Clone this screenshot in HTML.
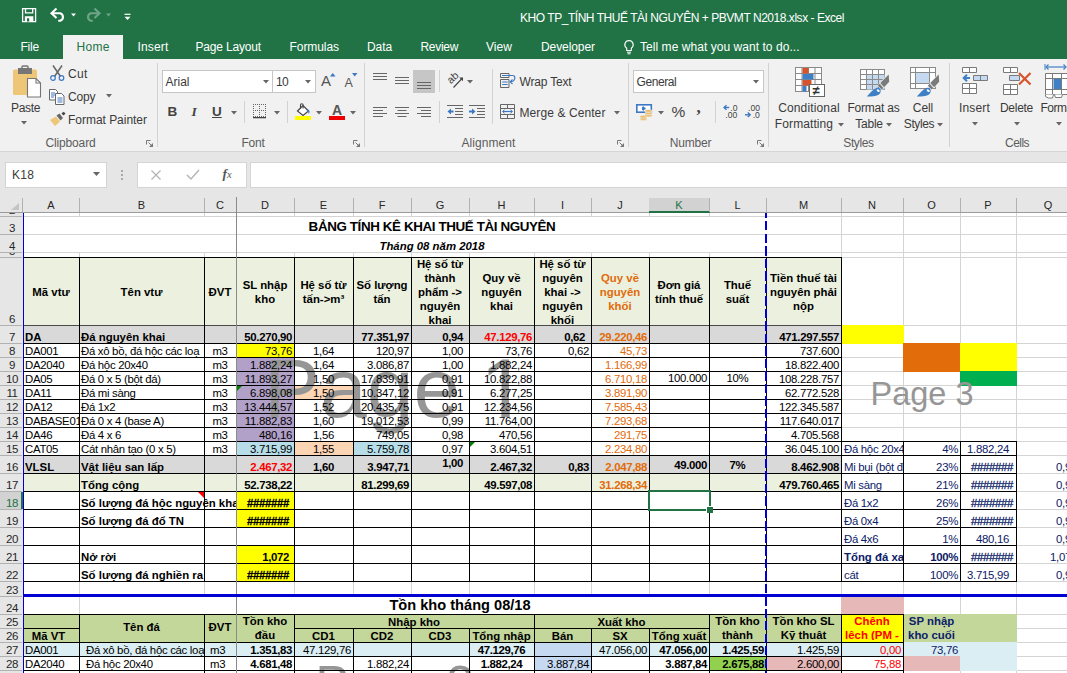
<!DOCTYPE html><html lang="vi"><head><meta charset="utf-8"><title>KHO TP_TÍNH THUẾ TÀI NGUYÊN + PBVMT N2018.xlsx - Excel</title><style>
*{box-sizing:border-box;margin:0;padding:0}
html,body{width:1067px;height:673px;overflow:hidden;background:#fff}
body{position:relative;font-family:"Liberation Sans",sans-serif;font-size:12px;color:#262626}
.abs{position:absolute}
#grid{position:absolute;left:0;top:0;width:1067px;height:673px;overflow:hidden}
.f,.l,.t,.wm{position:absolute}
.t{font-size:11.4px;line-height:13px;color:#000;overflow:hidden;white-space:nowrap;display:flex;align-items:flex-end;justify-content:flex-end;padding:0 2px 0 1px}
.t.b{font-weight:bold}
.t.n{letter-spacing:-.33px}
.t.h{-webkit-text-stroke:.3px currentColor}
.t.r{letter-spacing:-.3px}
.t.i{font-style:italic}
.t.c{justify-content:center;text-align:center}
.t.lft{justify-content:flex-start;text-align:left}
.t.m{align-items:center}
.t.top{align-items:flex-start;padding-top:1px}
.t.hd{line-height:14px}
.t.hd2{line-height:14px}
.wm{color:rgba(70,70,70,.62);white-space:nowrap;font-family:"Liberation Sans",sans-serif}
.ui{position:absolute;white-space:nowrap;font-size:12px;color:#3a3a3a}
.sep{position:absolute;width:1px;background:#d2d2d2}
.hc{position:absolute;top:197px;height:15px;font-size:11px;color:#262626;text-align:center;line-height:16px}
.hr{position:absolute;left:0;width:22px;font-size:11.5px;color:#262626;text-align:center;overflow:hidden}
.hr span{position:absolute;left:1px;width:22px;bottom:-1px;line-height:13px;letter-spacing:-.4px}
svg{position:absolute;overflow:visible}
</style></head><body>
<div id="grid">
<div class="abs" style="left:0;top:212px;width:1067px;height:461px;background:#fff"></div>
<div class="l" style="left:79px;top:213px;width:1px;height:460px;background:#d4d4d4"></div>
<div class="l" style="left:204px;top:213px;width:1px;height:460px;background:#d4d4d4"></div>
<div class="l" style="left:236px;top:213px;width:1px;height:460px;background:#d4d4d4"></div>
<div class="l" style="left:294px;top:213px;width:1px;height:460px;background:#d4d4d4"></div>
<div class="l" style="left:353px;top:213px;width:1px;height:460px;background:#d4d4d4"></div>
<div class="l" style="left:411px;top:213px;width:1px;height:460px;background:#d4d4d4"></div>
<div class="l" style="left:469px;top:213px;width:1px;height:460px;background:#d4d4d4"></div>
<div class="l" style="left:534px;top:213px;width:1px;height:460px;background:#d4d4d4"></div>
<div class="l" style="left:591px;top:213px;width:1px;height:460px;background:#d4d4d4"></div>
<div class="l" style="left:649px;top:213px;width:1px;height:460px;background:#d4d4d4"></div>
<div class="l" style="left:709px;top:213px;width:1px;height:460px;background:#d4d4d4"></div>
<div class="l" style="left:766px;top:213px;width:1px;height:460px;background:#d4d4d4"></div>
<div class="l" style="left:841px;top:213px;width:1px;height:460px;background:#d4d4d4"></div>
<div class="l" style="left:903px;top:213px;width:1px;height:460px;background:#d4d4d4"></div>
<div class="l" style="left:960px;top:213px;width:1px;height:460px;background:#d4d4d4"></div>
<div class="l" style="left:1016px;top:213px;width:1px;height:460px;background:#d4d4d4"></div>
<div class="l" style="left:1080px;top:213px;width:1px;height:460px;background:#d4d4d4"></div>
<div class="l" style="left:24px;top:216px;width:1043px;height:1px;background:#d4d4d4"></div>
<div class="l" style="left:24px;top:234px;width:1043px;height:1px;background:#d4d4d4"></div>
<div class="l" style="left:24px;top:252px;width:1043px;height:1px;background:#d4d4d4"></div>
<div class="l" style="left:24px;top:257px;width:1043px;height:1px;background:#d4d4d4"></div>
<div class="l" style="left:24px;top:325px;width:1043px;height:1px;background:#d4d4d4"></div>
<div class="l" style="left:24px;top:343px;width:1043px;height:1px;background:#d4d4d4"></div>
<div class="l" style="left:24px;top:357px;width:1043px;height:1px;background:#d4d4d4"></div>
<div class="l" style="left:24px;top:371px;width:1043px;height:1px;background:#d4d4d4"></div>
<div class="l" style="left:24px;top:385px;width:1043px;height:1px;background:#d4d4d4"></div>
<div class="l" style="left:24px;top:399px;width:1043px;height:1px;background:#d4d4d4"></div>
<div class="l" style="left:24px;top:413px;width:1043px;height:1px;background:#d4d4d4"></div>
<div class="l" style="left:24px;top:427px;width:1043px;height:1px;background:#d4d4d4"></div>
<div class="l" style="left:24px;top:441px;width:1043px;height:1px;background:#d4d4d4"></div>
<div class="l" style="left:24px;top:455px;width:1043px;height:1px;background:#d4d4d4"></div>
<div class="l" style="left:24px;top:473px;width:1043px;height:1px;background:#d4d4d4"></div>
<div class="l" style="left:24px;top:491px;width:1043px;height:1px;background:#d4d4d4"></div>
<div class="l" style="left:24px;top:509px;width:1043px;height:1px;background:#d4d4d4"></div>
<div class="l" style="left:24px;top:527px;width:1043px;height:1px;background:#d4d4d4"></div>
<div class="l" style="left:24px;top:545px;width:1043px;height:1px;background:#d4d4d4"></div>
<div class="l" style="left:24px;top:563px;width:1043px;height:1px;background:#d4d4d4"></div>
<div class="l" style="left:24px;top:581px;width:1043px;height:1px;background:#d4d4d4"></div>
<div class="l" style="left:24px;top:596px;width:1043px;height:1px;background:#d4d4d4"></div>
<div class="l" style="left:24px;top:614px;width:1043px;height:1px;background:#d4d4d4"></div>
<div class="l" style="left:24px;top:628px;width:1043px;height:1px;background:#d4d4d4"></div>
<div class="l" style="left:24px;top:642px;width:1043px;height:1px;background:#d4d4d4"></div>
<div class="l" style="left:24px;top:656px;width:1043px;height:1px;background:#d4d4d4"></div>
<div class="l" style="left:24px;top:670px;width:1043px;height:1px;background:#d4d4d4"></div>
<div class="l" style="left:24px;top:684px;width:1043px;height:1px;background:#d4d4d4"></div>
<div class="l" style="left:24px;top:217px;width:817px;height:17px;background:#fff"></div>
<div class="l" style="left:24px;top:235px;width:817px;height:17px;background:#fff"></div>
<div class="l" style="left:80px;top:597px;width:761px;height:17px;background:#fff"></div>
<div class="f" style="left:23px;top:257px;width:819px;height:69px;background:#ebf1de"></div>
<div class="f" style="left:23px;top:325px;width:819px;height:19px;background:#d9d9d9"></div>
<div class="f" style="left:841px;top:325px;width:63px;height:19px;background:#ffff00"></div>
<div class="f" style="left:236px;top:343px;width:59px;height:15px;background:#ffff00"></div>
<div class="f" style="left:236px;top:357px;width:59px;height:85px;background:#b1a0c7"></div>
<div class="f" style="left:294px;top:385px;width:60px;height:15px;background:#fcd5b4"></div>
<div class="f" style="left:236px;top:441px;width:59px;height:15px;background:#b7dee8"></div>
<div class="f" style="left:294px;top:441px;width:60px;height:15px;background:#fcd5b4"></div>
<div class="f" style="left:353px;top:441px;width:59px;height:15px;background:#b7dee8"></div>
<div class="f" style="left:23px;top:455px;width:819px;height:19px;background:#d9d9d9"></div>
<div class="f" style="left:23px;top:473px;width:819px;height:19px;background:#ebf1de"></div>
<div class="f" style="left:236px;top:491px;width:59px;height:19px;background:#ffff00"></div>
<div class="f" style="left:236px;top:509px;width:59px;height:19px;background:#ffff00"></div>
<div class="f" style="left:236px;top:545px;width:59px;height:19px;background:#ffff00"></div>
<div class="f" style="left:236px;top:563px;width:59px;height:19px;background:#ffff00"></div>
<div class="f" style="left:903px;top:343px;width:58px;height:29px;background:#e26b0a"></div>
<div class="f" style="left:960px;top:343px;width:57px;height:29px;background:#ffff00"></div>
<div class="f" style="left:960px;top:371px;width:57px;height:15px;background:#00b050"></div>
<div class="f" style="left:841px;top:596px;width:63px;height:19px;background:#e6b8b7"></div>
<div class="f" style="left:23px;top:614px;width:819px;height:29px;background:#c4d79b"></div>
<div class="f" style="left:841px;top:614px;width:63px;height:29px;background:#ffff00"></div>
<div class="f" style="left:903px;top:614px;width:114px;height:29px;background:#c4d79b"></div>
<div class="f" style="left:23px;top:642px;width:994px;height:15px;background:#daeef3"></div>
<div class="f" style="left:534px;top:642px;width:58px;height:29px;background:#c5d9f1"></div>
<div class="f" style="left:709px;top:656px;width:58px;height:15px;background:#92d050"></div>
<div class="f" style="left:766px;top:656px;width:76px;height:15px;background:#e6b8b7"></div>
<div class="f" style="left:903px;top:656px;width:58px;height:15px;background:#e6b8b7"></div>
<div class="f" style="left:960px;top:656px;width:57px;height:15px;background:#daeef3"></div>
<div class="wm" style="left:264px;top:338px;font-size:84px;line-height:100px;color:#969696">Page <span style="display:inline-block;margin-left:-3px;clip-path:polygon(0 0,47px 0,47px 71.5px,29.2px 71.5px,29.2px 100px,20.8px 100px,20.8px 71.5px,0 71.5px)">1</span></div>
<div class="wm" style="left:870.5px;top:374.5px;font-size:32.5px;line-height:38px;color:#969696">Page 3</div>
<div class="wm" style="left:315.6px;top:652px;font-size:50px;line-height:64px;color:#969696;letter-spacing:0px">Page 2</div>
<div class="l" style="left:24px;top:257px;width:818px;height:1px;background:#000"></div>
<div class="l" style="left:24px;top:325px;width:818px;height:1px;background:#4a4a4a"></div>
<div class="l" style="left:24px;top:343px;width:818px;height:1px;background:#000"></div>
<div class="l" style="left:24px;top:357px;width:818px;height:1px;background:#000"></div>
<div class="l" style="left:24px;top:371px;width:818px;height:1px;background:#000"></div>
<div class="l" style="left:24px;top:385px;width:818px;height:1px;background:#000"></div>
<div class="l" style="left:24px;top:399px;width:818px;height:1px;background:#000"></div>
<div class="l" style="left:24px;top:413px;width:818px;height:1px;background:#000"></div>
<div class="l" style="left:24px;top:427px;width:818px;height:1px;background:#000"></div>
<div class="l" style="left:24px;top:441px;width:818px;height:1px;background:#000"></div>
<div class="l" style="left:24px;top:455px;width:818px;height:1px;background:#000"></div>
<div class="l" style="left:24px;top:473px;width:818px;height:1px;background:#000"></div>
<div class="l" style="left:24px;top:491px;width:818px;height:1px;background:#000"></div>
<div class="l" style="left:24px;top:509px;width:818px;height:1px;background:#000"></div>
<div class="l" style="left:24px;top:527px;width:818px;height:1px;background:#000"></div>
<div class="l" style="left:24px;top:545px;width:818px;height:1px;background:#000"></div>
<div class="l" style="left:24px;top:563px;width:818px;height:1px;background:#000"></div>
<div class="l" style="left:24px;top:581px;width:818px;height:1px;background:#000"></div>
<div class="l" style="left:79px;top:257px;width:1px;height:325px;background:#000"></div>
<div class="l" style="left:204px;top:257px;width:1px;height:325px;background:#000"></div>
<div class="l" style="left:236px;top:257px;width:1px;height:325px;background:#000"></div>
<div class="l" style="left:294px;top:257px;width:1px;height:325px;background:#000"></div>
<div class="l" style="left:353px;top:257px;width:1px;height:325px;background:#000"></div>
<div class="l" style="left:411px;top:257px;width:1px;height:325px;background:#000"></div>
<div class="l" style="left:469px;top:257px;width:1px;height:325px;background:#000"></div>
<div class="l" style="left:534px;top:257px;width:1px;height:325px;background:#000"></div>
<div class="l" style="left:591px;top:257px;width:1px;height:325px;background:#000"></div>
<div class="l" style="left:649px;top:257px;width:1px;height:325px;background:#000"></div>
<div class="l" style="left:709px;top:257px;width:1px;height:325px;background:#000"></div>
<div class="l" style="left:766px;top:257px;width:1px;height:325px;background:#000"></div>
<div class="l" style="left:841px;top:257px;width:1px;height:325px;background:#000"></div>
<div class="l" style="left:841px;top:441px;width:176px;height:1px;background:#000"></div>
<div class="l" style="left:841px;top:455px;width:176px;height:1px;background:#000"></div>
<div class="l" style="left:841px;top:473px;width:176px;height:1px;background:#000"></div>
<div class="l" style="left:841px;top:491px;width:176px;height:1px;background:#000"></div>
<div class="l" style="left:841px;top:509px;width:176px;height:1px;background:#000"></div>
<div class="l" style="left:841px;top:527px;width:176px;height:1px;background:#000"></div>
<div class="l" style="left:841px;top:545px;width:176px;height:1px;background:#000"></div>
<div class="l" style="left:841px;top:563px;width:176px;height:1px;background:#000"></div>
<div class="l" style="left:841px;top:581px;width:176px;height:1px;background:#000"></div>
<div class="l" style="left:903px;top:441px;width:1px;height:141px;background:#000"></div>
<div class="l" style="left:960px;top:441px;width:1px;height:141px;background:#000"></div>
<div class="l" style="left:1016px;top:441px;width:1px;height:141px;background:#000"></div>
<div class="l" style="left:24px;top:614px;width:880px;height:1px;background:#000"></div>
<div class="l" style="left:24px;top:628px;width:56px;height:1px;background:#000"></div>
<div class="l" style="left:294px;top:628px;width:416px;height:1px;background:#000"></div>
<div class="l" style="left:24px;top:642px;width:880px;height:1px;background:#000"></div>
<div class="l" style="left:24px;top:656px;width:880px;height:1px;background:#000"></div>
<div class="l" style="left:24px;top:670px;width:880px;height:1px;background:#000"></div>
<div class="l" style="left:79px;top:614px;width:1px;height:59px;background:#000"></div>
<div class="l" style="left:204px;top:614px;width:1px;height:59px;background:#000"></div>
<div class="l" style="left:236px;top:614px;width:1px;height:59px;background:#000"></div>
<div class="l" style="left:294px;top:614px;width:1px;height:59px;background:#000"></div>
<div class="l" style="left:534px;top:614px;width:1px;height:59px;background:#000"></div>
<div class="l" style="left:709px;top:614px;width:1px;height:59px;background:#000"></div>
<div class="l" style="left:766px;top:614px;width:1px;height:59px;background:#000"></div>
<div class="l" style="left:841px;top:614px;width:1px;height:59px;background:#000"></div>
<div class="l" style="left:903px;top:614px;width:1px;height:59px;background:#000"></div>
<div class="l" style="left:353px;top:628px;width:1px;height:45px;background:#000"></div>
<div class="l" style="left:411px;top:628px;width:1px;height:45px;background:#000"></div>
<div class="l" style="left:469px;top:628px;width:1px;height:45px;background:#000"></div>
<div class="l" style="left:591px;top:628px;width:1px;height:45px;background:#000"></div>
<div class="l" style="left:649px;top:628px;width:1px;height:45px;background:#000"></div>
<div class="t b c" style="left:24px;top:217px;width:817px;height:18px;font-size:13.4px;letter-spacing:-.39px;padding-bottom:2px"><span>BẢNG TÍNH KÊ KHAI THUẾ TÀI NGUYÊN</span></div>
<div class="t b c i" style="left:24px;top:235px;width:817px;height:18px;"><span>Tháng 08 năm 2018</span></div>
<div class="t b c m hd" style="left:24px;top:258px;width:55px;height:68px;"><span>Mã vtư</span></div>
<div class="t b c m hd" style="left:80px;top:258px;width:124px;height:68px;"><span>Tên vtư</span></div>
<div class="t b c m hd" style="left:205px;top:258px;width:31px;height:68px;"><span>ĐVT</span></div>
<div class="t b c m hd" style="left:237px;top:258px;width:57px;height:68px;"><span>SL nhập<br>kho</span></div>
<div class="t b c m hd" style="left:295px;top:258px;width:58px;height:68px;"><span>Hệ số từ<br>tấn-&gt;m³</span></div>
<div class="t b c m hd" style="left:354px;top:258px;width:57px;height:68px;"><span>Số lượng<br>tấn</span></div>
<div class="t b c m hd" style="left:412px;top:258px;width:57px;height:68px;"><span>Hệ số từ<br>thành<br>phẩm -&gt;<br>nguyên<br>khai</span></div>
<div class="t b c m hd" style="left:470px;top:258px;width:64px;height:68px;"><span>Quy về<br>nguyên<br>khai</span></div>
<div class="t b c m hd" style="left:535px;top:258px;width:56px;height:68px;"><span>Hệ số từ<br>nguyên<br>khai -&gt;<br>nguyên<br>khối</span></div>
<div class="t b c m hd" style="left:592px;top:258px;width:57px;height:68px;color:#e26b0a"><span>Quy về<br>nguyên<br>khối</span></div>
<div class="t b c m hd" style="left:650px;top:258px;width:59px;height:68px;"><span>Đơn giá<br>tính thuế</span></div>
<div class="t b c m hd" style="left:710px;top:258px;width:56px;height:68px;"><span>Thuế<br>suất</span></div>
<div class="t b c m hd" style="left:767px;top:258px;width:74px;height:68px;"><span>Tiền thuế tài<br>nguyên phải<br>nộp</span></div>
<div class="t b lft" style="left:24px;top:326px;width:55px;height:18px;"><span>DA</span></div>
<div class="t b lft" style="left:80px;top:326px;width:124px;height:18px;"><span>Đá nguyên khai</span></div>
<div class="t b  n" style="left:237px;top:326px;width:57px;height:18px;"><span>50.270,90</span></div>
<div class="t b  n" style="left:354px;top:326px;width:57px;height:18px;"><span>77.351,97</span></div>
<div class="t b rt n" style="left:412px;top:326px;width:57px;height:18px;padding-right:6px"><span>0,94</span></div>
<div class="t b  n" style="left:470px;top:326px;width:64px;height:18px;color:#ff0000"><span>47.129,76</span></div>
<div class="t b rt n" style="left:535px;top:326px;width:56px;height:18px;padding-right:6px"><span>0,62</span></div>
<div class="t b  n" style="left:592px;top:326px;width:57px;height:18px;color:#e26b0a"><span>29.220,46</span></div>
<div class="t b  n" style="left:767px;top:326px;width:74px;height:18px;"><span>471.297.557</span></div>
<div class="t lft r" style="left:24px;top:344px;width:55px;height:14px;"><span>DA001</span></div>
<div class="t lft r" style="left:80px;top:344px;width:124px;height:14px;"><span>Đá xô bồ, đá hộc các loạ</span></div>
<div class="t c r" style="left:205px;top:344px;width:31px;height:14px;"><span>m3</span></div>
<div class="t  n r" style="left:237px;top:344px;width:57px;height:14px;"><span>73,76</span></div>
<div class="t c n r" style="left:295px;top:344px;width:58px;height:14px;"><span>1,64</span></div>
<div class="t  n r" style="left:354px;top:344px;width:57px;height:14px;"><span>120,97</span></div>
<div class="t top n r" style="left:412px;top:344px;width:57px;height:14px;padding-right:6px"><span>1,00</span></div>
<div class="t  n r" style="left:470px;top:344px;width:64px;height:14px;"><span>73,76</span></div>
<div class="t  n r" style="left:535px;top:344px;width:56px;height:14px;"><span>0,62</span></div>
<div class="t  n r" style="left:592px;top:344px;width:57px;height:14px;color:#e26b0a"><span>45,73</span></div>
<div class="t  r" style="left:650px;top:344px;width:59px;height:14px;padding-bottom:1px"><span></span></div>
<div class="t c r" style="left:710px;top:344px;width:56px;height:14px;padding-bottom:1px"><span></span></div>
<div class="t  n r" style="left:767px;top:344px;width:74px;height:14px;"><span>737.600</span></div>
<div class="t lft r" style="left:24px;top:358px;width:55px;height:14px;"><span>DA2040</span></div>
<div class="t lft r" style="left:80px;top:358px;width:124px;height:14px;"><span>Đá hộc 20x40</span></div>
<div class="t c r" style="left:205px;top:358px;width:31px;height:14px;"><span>m3</span></div>
<div class="t  n r" style="left:237px;top:358px;width:57px;height:14px;"><span>1.882,24</span></div>
<div class="t c n r" style="left:295px;top:358px;width:58px;height:14px;"><span>1,64</span></div>
<div class="t  n r" style="left:354px;top:358px;width:57px;height:14px;"><span>3.086,87</span></div>
<div class="t top n r" style="left:412px;top:358px;width:57px;height:14px;padding-right:6px"><span>1,00</span></div>
<div class="t  n r" style="left:470px;top:358px;width:64px;height:14px;"><span>1.882,24</span></div>
<div class="t  r" style="left:535px;top:358px;width:56px;height:14px;"><span></span></div>
<div class="t  n r" style="left:592px;top:358px;width:57px;height:14px;color:#e26b0a"><span>1.166,99</span></div>
<div class="t  r" style="left:650px;top:358px;width:59px;height:14px;padding-bottom:1px"><span></span></div>
<div class="t c r" style="left:710px;top:358px;width:56px;height:14px;padding-bottom:1px"><span></span></div>
<div class="t  n r" style="left:767px;top:358px;width:74px;height:14px;"><span>18.822.400</span></div>
<div class="t lft r" style="left:24px;top:372px;width:55px;height:14px;"><span>DA05</span></div>
<div class="t lft r" style="left:80px;top:372px;width:124px;height:14px;"><span>Đá 0 x 5 (bột đá)</span></div>
<div class="t c r" style="left:205px;top:372px;width:31px;height:14px;"><span>m3</span></div>
<div class="t  n r" style="left:237px;top:372px;width:57px;height:14px;"><span>11.893,27</span></div>
<div class="t c n r" style="left:295px;top:372px;width:58px;height:14px;"><span>1,50</span></div>
<div class="t  n r" style="left:354px;top:372px;width:57px;height:14px;"><span>17.839,91</span></div>
<div class="t top n r" style="left:412px;top:372px;width:57px;height:14px;padding-right:6px"><span>0,91</span></div>
<div class="t  n r" style="left:470px;top:372px;width:64px;height:14px;"><span>10.822,88</span></div>
<div class="t  r" style="left:535px;top:372px;width:56px;height:14px;"><span></span></div>
<div class="t  n r" style="left:592px;top:372px;width:57px;height:14px;color:#e26b0a"><span>6.710,18</span></div>
<div class="t  n r" style="left:650px;top:372px;width:59px;height:14px;padding-bottom:1px"><span>100.000</span></div>
<div class="t c n r" style="left:710px;top:372px;width:56px;height:14px;padding-bottom:1px"><span>10%</span></div>
<div class="t  n r" style="left:767px;top:372px;width:74px;height:14px;"><span>108.228.757</span></div>
<div class="t lft r" style="left:24px;top:386px;width:55px;height:14px;"><span>DA11</span></div>
<div class="t lft r" style="left:80px;top:386px;width:124px;height:14px;"><span>Đá mi sàng</span></div>
<div class="t c r" style="left:205px;top:386px;width:31px;height:14px;"><span>m3</span></div>
<div class="t  n r" style="left:237px;top:386px;width:57px;height:14px;"><span>6.898,08</span></div>
<div class="t c n r" style="left:295px;top:386px;width:58px;height:14px;"><span>1,50</span></div>
<div class="t  n r" style="left:354px;top:386px;width:57px;height:14px;"><span>10.347,12</span></div>
<div class="t top n r" style="left:412px;top:386px;width:57px;height:14px;padding-right:6px"><span>0,91</span></div>
<div class="t  n r" style="left:470px;top:386px;width:64px;height:14px;"><span>6.277,25</span></div>
<div class="t  r" style="left:535px;top:386px;width:56px;height:14px;"><span></span></div>
<div class="t  n r" style="left:592px;top:386px;width:57px;height:14px;color:#e26b0a"><span>3.891,90</span></div>
<div class="t  r" style="left:650px;top:386px;width:59px;height:14px;padding-bottom:1px"><span></span></div>
<div class="t c r" style="left:710px;top:386px;width:56px;height:14px;padding-bottom:1px"><span></span></div>
<div class="t  n r" style="left:767px;top:386px;width:74px;height:14px;"><span>62.772.528</span></div>
<div class="t lft r" style="left:24px;top:400px;width:55px;height:14px;"><span>DA12</span></div>
<div class="t lft r" style="left:80px;top:400px;width:124px;height:14px;"><span>Đá 1x2</span></div>
<div class="t c r" style="left:205px;top:400px;width:31px;height:14px;"><span>m3</span></div>
<div class="t  n r" style="left:237px;top:400px;width:57px;height:14px;"><span>13.444,57</span></div>
<div class="t c n r" style="left:295px;top:400px;width:58px;height:14px;"><span>1,52</span></div>
<div class="t  n r" style="left:354px;top:400px;width:57px;height:14px;"><span>20.435,75</span></div>
<div class="t top n r" style="left:412px;top:400px;width:57px;height:14px;padding-right:6px"><span>0,91</span></div>
<div class="t  n r" style="left:470px;top:400px;width:64px;height:14px;"><span>12.234,56</span></div>
<div class="t  r" style="left:535px;top:400px;width:56px;height:14px;"><span></span></div>
<div class="t  n r" style="left:592px;top:400px;width:57px;height:14px;color:#e26b0a"><span>7.585,43</span></div>
<div class="t  r" style="left:650px;top:400px;width:59px;height:14px;padding-bottom:1px"><span></span></div>
<div class="t c r" style="left:710px;top:400px;width:56px;height:14px;padding-bottom:1px"><span></span></div>
<div class="t  n r" style="left:767px;top:400px;width:74px;height:14px;"><span>122.345.587</span></div>
<div class="t lft r" style="left:24px;top:414px;width:55px;height:14px;"><span>DABASE01</span></div>
<div class="t lft r" style="left:80px;top:414px;width:124px;height:14px;"><span>Đá 0 x 4 (base A)</span></div>
<div class="t c r" style="left:205px;top:414px;width:31px;height:14px;"><span>m3</span></div>
<div class="t  n r" style="left:237px;top:414px;width:57px;height:14px;"><span>11.882,83</span></div>
<div class="t c n r" style="left:295px;top:414px;width:58px;height:14px;"><span>1,60</span></div>
<div class="t  n r" style="left:354px;top:414px;width:57px;height:14px;"><span>19.012,53</span></div>
<div class="t top n r" style="left:412px;top:414px;width:57px;height:14px;padding-right:6px"><span>0,99</span></div>
<div class="t  n r" style="left:470px;top:414px;width:64px;height:14px;"><span>11.764,00</span></div>
<div class="t  r" style="left:535px;top:414px;width:56px;height:14px;"><span></span></div>
<div class="t  n r" style="left:592px;top:414px;width:57px;height:14px;color:#e26b0a"><span>7.293,68</span></div>
<div class="t  r" style="left:650px;top:414px;width:59px;height:14px;padding-bottom:1px"><span></span></div>
<div class="t c r" style="left:710px;top:414px;width:56px;height:14px;padding-bottom:1px"><span></span></div>
<div class="t  n r" style="left:767px;top:414px;width:74px;height:14px;"><span>117.640.017</span></div>
<div class="t lft r" style="left:24px;top:428px;width:55px;height:14px;"><span>DA46</span></div>
<div class="t lft r" style="left:80px;top:428px;width:124px;height:14px;"><span>Đá 4 x 6</span></div>
<div class="t c r" style="left:205px;top:428px;width:31px;height:14px;"><span>m3</span></div>
<div class="t  n r" style="left:237px;top:428px;width:57px;height:14px;"><span>480,16</span></div>
<div class="t c n r" style="left:295px;top:428px;width:58px;height:14px;"><span>1,56</span></div>
<div class="t  n r" style="left:354px;top:428px;width:57px;height:14px;"><span>749,05</span></div>
<div class="t top n r" style="left:412px;top:428px;width:57px;height:14px;padding-right:6px"><span>0,98</span></div>
<div class="t  n r" style="left:470px;top:428px;width:64px;height:14px;"><span>470,56</span></div>
<div class="t  r" style="left:535px;top:428px;width:56px;height:14px;"><span></span></div>
<div class="t  n r" style="left:592px;top:428px;width:57px;height:14px;color:#e26b0a"><span>291,75</span></div>
<div class="t  r" style="left:650px;top:428px;width:59px;height:14px;padding-bottom:1px"><span></span></div>
<div class="t c r" style="left:710px;top:428px;width:56px;height:14px;padding-bottom:1px"><span></span></div>
<div class="t  n r" style="left:767px;top:428px;width:74px;height:14px;"><span>4.705.568</span></div>
<div class="t lft r" style="left:24px;top:442px;width:55px;height:14px;"><span>CAT05</span></div>
<div class="t lft r" style="left:80px;top:442px;width:124px;height:14px;"><span>Cát nhân tạo (0 x 5)</span></div>
<div class="t c r" style="left:205px;top:442px;width:31px;height:14px;"><span>m3</span></div>
<div class="t  n r" style="left:237px;top:442px;width:57px;height:14px;"><span>3.715,99</span></div>
<div class="t c n r" style="left:295px;top:442px;width:58px;height:14px;"><span>1,55</span></div>
<div class="t  n r" style="left:354px;top:442px;width:57px;height:14px;"><span>5.759,78</span></div>
<div class="t top n r" style="left:412px;top:442px;width:57px;height:14px;padding-right:6px"><span>0,97</span></div>
<div class="t  n r" style="left:470px;top:442px;width:64px;height:14px;"><span>3.604,51</span></div>
<div class="t  r" style="left:535px;top:442px;width:56px;height:14px;"><span></span></div>
<div class="t  n r" style="left:592px;top:442px;width:57px;height:14px;color:#e26b0a"><span>2.234,80</span></div>
<div class="t  r" style="left:650px;top:442px;width:59px;height:14px;padding-bottom:1px"><span></span></div>
<div class="t c r" style="left:710px;top:442px;width:56px;height:14px;padding-bottom:1px"><span></span></div>
<div class="t  n r" style="left:767px;top:442px;width:74px;height:14px;"><span>36.045.100</span></div>
<div class="t b lft" style="left:24px;top:456px;width:55px;height:18px;"><span>VLSL</span></div>
<div class="t b lft" style="left:80px;top:456px;width:124px;height:18px;"><span>Vật liệu san lấp</span></div>
<div class="t b  n" style="left:237px;top:456px;width:57px;height:18px;color:#ff0000"><span>2.467,32</span></div>
<div class="t b c n" style="left:295px;top:456px;width:58px;height:18px;"><span>1,60</span></div>
<div class="t b  n" style="left:354px;top:456px;width:57px;height:18px;"><span>3.947,71</span></div>
<div class="t b top n" style="left:412px;top:456px;width:57px;height:18px;padding-right:6px"><span>1,00</span></div>
<div class="t b  n" style="left:470px;top:456px;width:64px;height:18px;"><span>2.467,32</span></div>
<div class="t b  n" style="left:535px;top:456px;width:56px;height:18px;"><span>0,83</span></div>
<div class="t b  n" style="left:592px;top:456px;width:57px;height:18px;color:#e26b0a"><span>2.047,88</span></div>
<div class="t b top n" style="left:650px;top:456px;width:59px;height:18px;padding-top:3px"><span>49.000</span></div>
<div class="t b c top n" style="left:710px;top:456px;width:56px;height:18px;padding-top:3px"><span>7%</span></div>
<div class="t b  n" style="left:767px;top:456px;width:74px;height:18px;"><span>8.462.908</span></div>
<div class="t b lft" style="left:80px;top:474px;width:124px;height:18px;"><span>Tổng cộng</span></div>
<div class="t b  n" style="left:237px;top:474px;width:57px;height:18px;"><span>52.738,22</span></div>
<div class="t b  n" style="left:354px;top:474px;width:57px;height:18px;"><span>81.299,69</span></div>
<div class="t b  n" style="left:470px;top:474px;width:64px;height:18px;"><span>49.597,08</span></div>
<div class="t b  n" style="left:592px;top:474px;width:57px;height:18px;color:#e26b0a"><span>31.268,34</span></div>
<div class="t b  n" style="left:767px;top:474px;width:74px;height:18px;"><span>479.760.465</span></div>
<div class="t b lft" style="left:80px;top:492px;width:156px;height:18px;"><span>Số lượng đá hộc nguyên kha</span></div>
<div class="t b lft" style="left:80px;top:510px;width:124px;height:18px;"><span>Số lượng đá đổ TN</span></div>
<div class="t b lft" style="left:80px;top:546px;width:124px;height:18px;"><span>Nở rời</span></div>
<div class="t b lft" style="left:80px;top:564px;width:124px;height:18px;"><span>Số lượng đá nghiền ra</span></div>
<div class="t b n h" style="left:237px;top:492px;width:57px;height:18px;padding-right:5px"><span>#######</span></div>
<div class="t b n h" style="left:237px;top:510px;width:57px;height:18px;padding-right:5px"><span>#######</span></div>
<div class="t b n" style="left:237px;top:546px;width:57px;height:18px;padding-right:5px"><span>1,072</span></div>
<div class="t b n h" style="left:237px;top:564px;width:57px;height:18px;padding-right:5px"><span>#######</span></div>
<div class="t lft r" style="left:842px;top:442px;width:61px;height:14px;color:#0c2068;padding-left:2px"><span>Đá hộc 20x4</span></div>
<div class="t  n r" style="left:904px;top:442px;width:56px;height:14px;color:#0c2068;"><span>4%</span></div>
<div class="t  n r" style="left:961px;top:442px;width:55px;height:14px;color:#0c2068;padding-right:7px"><span>1.882,24</span></div>
<div class="t lft r" style="left:842px;top:456px;width:61px;height:18px;color:#0c2068;padding-left:2px"><span>Mi bụi (bột đ</span></div>
<div class="t  n r" style="left:904px;top:456px;width:56px;height:18px;color:#0c2068;"><span>23%</span></div>
<div class="t  n h" style="left:961px;top:456px;width:55px;height:18px;color:#0c2068;padding-right:3px"><span>#######</span></div>
<div class="t lft n r" style="left:1017px;top:456px;width:63px;height:18px;color:#0c2068;padding-left:39px"><span>0,90</span></div>
<div class="t lft r" style="left:842px;top:474px;width:61px;height:18px;color:#0c2068;padding-left:2px"><span>Mi sàng</span></div>
<div class="t  n r" style="left:904px;top:474px;width:56px;height:18px;color:#0c2068;"><span>21%</span></div>
<div class="t  n h" style="left:961px;top:474px;width:55px;height:18px;color:#0c2068;padding-right:3px"><span>#######</span></div>
<div class="t lft n r" style="left:1017px;top:474px;width:63px;height:18px;color:#0c2068;padding-left:39px"><span>0,90</span></div>
<div class="t lft r" style="left:842px;top:492px;width:61px;height:18px;color:#0c2068;padding-left:2px"><span>Đá 1x2</span></div>
<div class="t  n r" style="left:904px;top:492px;width:56px;height:18px;color:#0c2068;"><span>26%</span></div>
<div class="t  n h" style="left:961px;top:492px;width:55px;height:18px;color:#0c2068;padding-right:3px"><span>#######</span></div>
<div class="t lft n r" style="left:1017px;top:492px;width:63px;height:18px;color:#0c2068;padding-left:39px"><span>0,90</span></div>
<div class="t lft r" style="left:842px;top:510px;width:61px;height:18px;color:#0c2068;padding-left:2px"><span>Đá 0x4</span></div>
<div class="t  n r" style="left:904px;top:510px;width:56px;height:18px;color:#0c2068;"><span>25%</span></div>
<div class="t  n h" style="left:961px;top:510px;width:55px;height:18px;color:#0c2068;padding-right:3px"><span>#######</span></div>
<div class="t lft n r" style="left:1017px;top:510px;width:63px;height:18px;color:#0c2068;padding-left:39px"><span>0,90</span></div>
<div class="t lft r" style="left:842px;top:528px;width:61px;height:18px;color:#0c2068;padding-left:2px"><span>Đá 4x6</span></div>
<div class="t  n r" style="left:904px;top:528px;width:56px;height:18px;color:#0c2068;"><span>1%</span></div>
<div class="t  n r" style="left:961px;top:528px;width:55px;height:18px;color:#0c2068;padding-right:7px"><span>480,16</span></div>
<div class="t lft n r" style="left:1017px;top:528px;width:63px;height:18px;color:#0c2068;padding-left:39px"><span>0,90</span></div>
<div class="t b lft" style="left:842px;top:546px;width:61px;height:18px;color:#0c2068;padding-left:2px"><span>Tổng đá xa</span></div>
<div class="t b  n" style="left:904px;top:546px;width:56px;height:18px;color:#0c2068;"><span>100%</span></div>
<div class="t  n h" style="left:961px;top:546px;width:55px;height:18px;color:#0c2068;padding-right:3px"><span>#######</span></div>
<div class="t lft n r" style="left:1017px;top:546px;width:63px;height:18px;color:#0c2068;padding-left:33px"><span>1,07</span></div>
<div class="t lft r" style="left:842px;top:564px;width:61px;height:18px;color:#0c2068;padding-left:2px"><span>cát</span></div>
<div class="t  n r" style="left:904px;top:564px;width:56px;height:18px;color:#0c2068;"><span>100%</span></div>
<div class="t  n r" style="left:961px;top:564px;width:55px;height:18px;color:#0c2068;padding-right:7px"><span>3.715,99</span></div>
<div class="t lft n r" style="left:1017px;top:564px;width:63px;height:18px;color:#0c2068;padding-left:39px"><span>0,90</span></div>
<div class="t b c" style="left:80px;top:597px;width:761px;height:18px;font-size:14.6px;line-height:17px;overflow:visible;padding-bottom:1px"><span>Tồn kho tháng 08/18</span></div>
<div class="t b c" style="left:24px;top:629px;width:55px;height:14px;padding-right:7px"><span>Mã VT</span></div>
<div class="t b c m" style="left:80px;top:615px;width:124px;height:25px;"><span>Tên đá</span></div>
<div class="t b c m" style="left:205px;top:615px;width:31px;height:25px;"><span>ĐVT</span></div>
<div class="t b c m hd2" style="left:237px;top:615px;width:57px;height:25px;"><span>Tồn kho<br>đầu</span></div>
<div class="t b c" style="left:295px;top:615px;width:239px;height:14px;"><span>Nhập kho</span></div>
<div class="t b c" style="left:535px;top:615px;width:174px;height:14px;"><span>Xuất kho</span></div>
<div class="t b c" style="left:295px;top:629px;width:58px;height:14px;"><span>CD1</span></div>
<div class="t b c" style="left:354px;top:629px;width:57px;height:14px;"><span>CD2</span></div>
<div class="t b c" style="left:412px;top:629px;width:57px;height:14px;"><span>CD3</span></div>
<div class="t b c" style="left:470px;top:629px;width:64px;height:14px;"><span>Tổng nhập</span></div>
<div class="t b c" style="left:535px;top:629px;width:56px;height:14px;"><span>Bán</span></div>
<div class="t b c" style="left:592px;top:629px;width:57px;height:14px;"><span>SX</span></div>
<div class="t b c" style="left:650px;top:629px;width:59px;height:14px;"><span>Tổng xuất</span></div>
<div class="t b c m hd2" style="left:710px;top:615px;width:56px;height:25px;"><span>Tồn kho<br>thành</span></div>
<div class="t b c m hd2" style="left:767px;top:615px;width:74px;height:25px;"><span>Tồn kho SL<br>Kỹ thuật</span></div>
<div class="t b c m hd2" style="left:842px;top:615px;width:61px;height:25px;color:#ff0000"><span>Chênh<br>lệch (PM -</span></div>
<div class="t b c m hd2" style="left:904px;top:615px;width:56px;height:25px;color:#0c2068"><span>SP nhập<br>kho cuối</span></div>
<div class="t lft r" style="left:24px;top:643px;width:55px;height:14px;"><span>DA001</span></div>
<div class="t lft r" style="left:80px;top:643px;width:124px;height:14px;padding-left:6px"><span>Đá xô bồ, đá hộc các loạ</span></div>
<div class="t lft r" style="left:205px;top:643px;width:31px;height:14px;padding-left:5px"><span>m3</span></div>
<div class="t b n" style="left:237px;top:643px;width:57px;height:14px;"><span>1.351,83</span></div>
<div class="t  n r" style="left:295px;top:643px;width:58px;height:14px;"><span>47.129,76</span></div>
<div class="t b c n" style="left:470px;top:643px;width:64px;height:14px;"><span>47.129,76</span></div>
<div class="t  n r" style="left:592px;top:643px;width:57px;height:14px;"><span>47.056,00</span></div>
<div class="t b n" style="left:650px;top:643px;width:59px;height:14px;"><span>47.056,00</span></div>
<div class="t b n" style="left:710px;top:643px;width:56px;height:14px;"><span>1.425,59</span></div>
<div class="t  n r" style="left:767px;top:643px;width:74px;height:14px;"><span>1.425,59</span></div>
<div class="t  n r" style="left:842px;top:643px;width:61px;height:14px;color:#ff0000"><span>0,00</span></div>
<div class="t  n r" style="left:904px;top:643px;width:56px;height:14px;color:#0c2068"><span>73,76</span></div>
<div class="t lft r" style="left:24px;top:657px;width:55px;height:14px;"><span>DA2040</span></div>
<div class="t lft r" style="left:80px;top:657px;width:124px;height:14px;padding-left:6px"><span>Đá hộc 20x40</span></div>
<div class="t lft r" style="left:205px;top:657px;width:31px;height:14px;padding-left:5px"><span>m3</span></div>
<div class="t b n" style="left:237px;top:657px;width:57px;height:14px;"><span>4.681,48</span></div>
<div class="t  n r" style="left:354px;top:657px;width:57px;height:14px;"><span>1.882,24</span></div>
<div class="t b c n" style="left:470px;top:657px;width:64px;height:14px;"><span>1.882,24</span></div>
<div class="t  n r" style="left:535px;top:657px;width:56px;height:14px;"><span>3.887,84</span></div>
<div class="t b n" style="left:650px;top:657px;width:59px;height:14px;"><span>3.887,84</span></div>
<div class="t b n" style="left:710px;top:657px;width:56px;height:14px;"><span>2.675,88</span></div>
<div class="t  n r" style="left:767px;top:657px;width:74px;height:14px;"><span>2.600,00</span></div>
<div class="t  n r" style="left:842px;top:657px;width:61px;height:14px;color:#ff0000"><span>75,88</span></div>
<div class="l" style="left:236px;top:197px;width:1px;height:476px;background:#8a8a8a"></div>
<div class="l" style="left:23px;top:213px;width:1px;height:460px;background:#0000d2"></div>
<div class="l" style="left:23px;top:594px;width:1044px;height:3px;background:#0000d2"></div>
<div class="l" style="left:765px;top:209px;width:2px;height:464px;clip-path:inset(4px 0 0 0);background:repeating-linear-gradient(to bottom,#0000d2 0 9px,transparent 9px 12.5px)"></div>
<div class="l" style="left:648px;top:490px;width:63px;height:21px;border:2px solid #217346"></div>
<div class="l" style="left:706px;top:506px;width:7px;height:7px;background:#217346;border:1px solid #fff;border-right:0;border-bottom:0"></div>
<div class="l" style="left:237px;top:386px;width:0;height:0;border-top:5px solid #008000;border-right:5px solid transparent"></div>
<div class="l" style="left:470px;top:442px;width:0;height:0;border-top:5px solid #008000;border-right:5px solid transparent"></div>
<div class="l" style="left:198px;top:492px;width:0;height:0;border-top:6px solid #ff0000;border-left:6px solid transparent"></div>
<div class="abs" style="left:0;top:190px;width:1067px;height:23px;background:#e6e6e6"></div>
<div class="abs" style="left:0;top:212px;width:1067px;height:1px;background:#9b9b9b"></div>
<div class="abs" style="left:0;top:213px;width:23px;height:460px;background:#e6e6e6"></div>
<div class="hc" style="left:23px;width:56px;">A</div>
<div class="abs" style="left:79px;top:198px;width:1px;height:14px;background:#b1b1b1"></div>
<div class="hc" style="left:79px;width:125px;">B</div>
<div class="abs" style="left:204px;top:198px;width:1px;height:14px;background:#b1b1b1"></div>
<div class="hc" style="left:204px;width:32px;">C</div>
<div class="abs" style="left:236px;top:198px;width:1px;height:14px;background:#b1b1b1"></div>
<div class="hc" style="left:236px;width:58px;">D</div>
<div class="abs" style="left:294px;top:198px;width:1px;height:14px;background:#b1b1b1"></div>
<div class="hc" style="left:294px;width:59px;">E</div>
<div class="abs" style="left:353px;top:198px;width:1px;height:14px;background:#b1b1b1"></div>
<div class="hc" style="left:353px;width:58px;">F</div>
<div class="abs" style="left:411px;top:198px;width:1px;height:14px;background:#b1b1b1"></div>
<div class="hc" style="left:411px;width:58px;">G</div>
<div class="abs" style="left:469px;top:198px;width:1px;height:14px;background:#b1b1b1"></div>
<div class="hc" style="left:469px;width:65px;">H</div>
<div class="abs" style="left:534px;top:198px;width:1px;height:14px;background:#b1b1b1"></div>
<div class="hc" style="left:534px;width:57px;">I</div>
<div class="abs" style="left:591px;top:198px;width:1px;height:14px;background:#b1b1b1"></div>
<div class="hc" style="left:591px;width:58px;">J</div>
<div class="abs" style="left:649px;top:198px;width:1px;height:14px;background:#b1b1b1"></div>
<div class="abs" style="left:649px;top:198px;width:61px;height:15px;background:#d2d2d2;border-bottom:2px solid #217346"></div>
<div class="hc" style="left:649px;width:60px;color:#217346;">K</div>
<div class="abs" style="left:709px;top:198px;width:1px;height:14px;background:#b1b1b1"></div>
<div class="hc" style="left:709px;width:57px;">L</div>
<div class="abs" style="left:766px;top:198px;width:1px;height:14px;background:#b1b1b1"></div>
<div class="hc" style="left:766px;width:75px;">M</div>
<div class="abs" style="left:841px;top:198px;width:1px;height:14px;background:#b1b1b1"></div>
<div class="hc" style="left:841px;width:62px;">N</div>
<div class="abs" style="left:903px;top:198px;width:1px;height:14px;background:#b1b1b1"></div>
<div class="hc" style="left:903px;width:57px;">O</div>
<div class="abs" style="left:960px;top:198px;width:1px;height:14px;background:#b1b1b1"></div>
<div class="hc" style="left:960px;width:56px;">P</div>
<div class="abs" style="left:1016px;top:198px;width:1px;height:14px;background:#b1b1b1"></div>
<div class="hc" style="left:1016px;width:64px;">Q</div>
<div class="abs" style="left:1080px;top:198px;width:1px;height:14px;background:#b1b1b1"></div>
<div class="abs" style="left:22px;top:198px;width:1px;height:14px;background:#b1b1b1"></div>
<div class="abs" style="left:236px;top:197px;width:1px;height:16px;background:#8a8a8a"></div>
<div class="abs" style="left:11px;top:203px;width:0;height:0;border-bottom:7px solid #c4c4c4;border-left:8px solid transparent"></div>
<div class="hr" style="top:213px;height:3px;"><span>2</span></div>
<div class="abs" style="left:0;top:216px;width:22px;height:1px;background:#b1b1b1"></div>
<div class="hr" style="top:217px;height:17px;"><span>3</span></div>
<div class="abs" style="left:0;top:234px;width:22px;height:1px;background:#b1b1b1"></div>
<div class="hr" style="top:235px;height:17px;"><span>4</span></div>
<div class="abs" style="left:0;top:252px;width:22px;height:1px;background:#b1b1b1"></div>
<div class="hr" style="top:253px;height:4px;"><span>5</span></div>
<div class="abs" style="left:0;top:257px;width:22px;height:1px;background:#b1b1b1"></div>
<div class="hr" style="top:258px;height:67px;"><span>6</span></div>
<div class="abs" style="left:0;top:325px;width:22px;height:1px;background:#b1b1b1"></div>
<div class="hr" style="top:326px;height:17px;"><span>7</span></div>
<div class="abs" style="left:0;top:343px;width:22px;height:1px;background:#b1b1b1"></div>
<div class="hr" style="top:344px;height:13px;"><span>8</span></div>
<div class="abs" style="left:0;top:357px;width:22px;height:1px;background:#b1b1b1"></div>
<div class="hr" style="top:358px;height:13px;"><span>9</span></div>
<div class="abs" style="left:0;top:371px;width:22px;height:1px;background:#b1b1b1"></div>
<div class="hr" style="top:372px;height:13px;"><span>10</span></div>
<div class="abs" style="left:0;top:385px;width:22px;height:1px;background:#b1b1b1"></div>
<div class="hr" style="top:386px;height:13px;"><span>11</span></div>
<div class="abs" style="left:0;top:399px;width:22px;height:1px;background:#b1b1b1"></div>
<div class="hr" style="top:400px;height:13px;"><span>12</span></div>
<div class="abs" style="left:0;top:413px;width:22px;height:1px;background:#b1b1b1"></div>
<div class="hr" style="top:414px;height:13px;"><span>13</span></div>
<div class="abs" style="left:0;top:427px;width:22px;height:1px;background:#b1b1b1"></div>
<div class="hr" style="top:428px;height:13px;"><span>14</span></div>
<div class="abs" style="left:0;top:441px;width:22px;height:1px;background:#b1b1b1"></div>
<div class="hr" style="top:442px;height:13px;"><span>15</span></div>
<div class="abs" style="left:0;top:455px;width:22px;height:1px;background:#b1b1b1"></div>
<div class="hr" style="top:456px;height:17px;"><span>16</span></div>
<div class="abs" style="left:0;top:473px;width:22px;height:1px;background:#b1b1b1"></div>
<div class="hr" style="top:474px;height:17px;"><span>17</span></div>
<div class="abs" style="left:0;top:491px;width:22px;height:1px;background:#b1b1b1"></div>
<div class="hr" style="top:492px;height:17px;background:#d2d2d2;border-right:2px solid #217346;width:23px;color:#217346;"><span>18</span></div>
<div class="abs" style="left:0;top:509px;width:22px;height:1px;background:#b1b1b1"></div>
<div class="hr" style="top:510px;height:17px;"><span>19</span></div>
<div class="abs" style="left:0;top:527px;width:22px;height:1px;background:#b1b1b1"></div>
<div class="hr" style="top:528px;height:17px;"><span>20</span></div>
<div class="abs" style="left:0;top:545px;width:22px;height:1px;background:#b1b1b1"></div>
<div class="hr" style="top:546px;height:17px;"><span>21</span></div>
<div class="abs" style="left:0;top:563px;width:22px;height:1px;background:#b1b1b1"></div>
<div class="hr" style="top:564px;height:17px;"><span>22</span></div>
<div class="abs" style="left:0;top:581px;width:22px;height:1px;background:#b1b1b1"></div>
<div class="hr" style="top:582px;height:14px;"><span>23</span></div>
<div class="abs" style="left:0;top:596px;width:22px;height:1px;background:#b1b1b1"></div>
<div class="hr" style="top:597px;height:17px;"><span>24</span></div>
<div class="abs" style="left:0;top:614px;width:22px;height:1px;background:#b1b1b1"></div>
<div class="hr" style="top:615px;height:13px;"><span>25</span></div>
<div class="abs" style="left:0;top:628px;width:22px;height:1px;background:#b1b1b1"></div>
<div class="hr" style="top:629px;height:13px;"><span>26</span></div>
<div class="abs" style="left:0;top:642px;width:22px;height:1px;background:#b1b1b1"></div>
<div class="hr" style="top:643px;height:13px;"><span>27</span></div>
<div class="abs" style="left:0;top:656px;width:22px;height:1px;background:#b1b1b1"></div>
<div class="hr" style="top:657px;height:13px;"><span>28</span></div>
<div class="abs" style="left:0;top:670px;width:22px;height:1px;background:#b1b1b1"></div>
<div class="hr" style="top:671px;height:13px;"><span>29</span></div>
<div class="abs" style="left:0;top:684px;width:22px;height:1px;background:#b1b1b1"></div>
</div>
<div class="abs" style="left:0;top:0;width:1067px;height:59px;background:#217346"></div>
<div class="abs" style="left:0;top:59px;width:1067px;height:92px;background:#f1f1f1"></div>
<div class="abs" style="left:0;top:151px;width:1067px;height:1px;background:#d5d5d5"></div>
<div class="abs" style="left:0;top:152px;width:1067px;height:45px;background:#e6e6e6"></div>
<div class="ui" style="left:520px;top:10px;color:#fff;font-size:12px;line-height:16px;letter-spacing:-0.46px">KHO TP_TÍNH THUẾ TÀI NGUYÊN + PBVMT N2018.xlsx - Excel</div>
<svg style="left:0;top:0" width="160" height="35" viewBox="0 0 160 35">
<g fill="none" stroke="#fff" stroke-width="1.3">
<path d="M22.6 8.6h13v13h-13z"/><path d="M25.5 8.6v4.2h7.2V8.6" /><path d="M25.5 21.6v-4.6h7.2v4.6" fill="#fff"/>
</g>
<rect x="27" y="18.3" width="2.2" height="3.2" fill="#217346"/>
<path d="M52 13.2h8.2a4 4 0 0 1 0 7.6h-2" fill="none" stroke="#fff" stroke-width="2.1"/>
<path d="M56.5 8.5l-5 4.7 5 4.7" fill="none" stroke="#fff" stroke-width="2.1"/>
<path d="M71 13.5h5l-2.5 3z" fill="#fff"/>
<g opacity=".35"><path d="M99 13.2h-8.2a4 4 0 0 0 0 7.6h2" fill="none" stroke="#fff" stroke-width="2.1"/>
<path d="M94.5 8.500l5 4.7-5 4.7" fill="none" stroke="#fff" stroke-width="2.1"/>
<path d="M106 13.5h5l-2.5 3z" fill="#fff"/></g>
<path d="M124.500 14.300h6" stroke="#fff" stroke-width="1.2"/><path d="M124.500 16.800h6l-3 3.200z" fill="#fff"/>
</svg>
<div class="abs" style="left:63px;top:35px;width:60px;height:25px;background:#f1f1f1"></div>
<div class="ui" style="left:20.5px;top:39px;font-size:12px;line-height:16px;color:#fff;letter-spacing:-0.21px">File</div>
<div class="ui" style="left:76.5px;top:39px;font-size:12px;line-height:16px;color:#217346;letter-spacing:0.30px">Home</div>
<div class="ui" style="left:137.5px;top:39px;font-size:12px;line-height:16px;color:#fff;letter-spacing:0.16px">Insert</div>
<div class="ui" style="left:195.5px;top:39px;font-size:12px;line-height:16px;color:#fff;letter-spacing:-0.17px">Page Layout</div>
<div class="ui" style="left:289.5px;top:39px;font-size:12px;line-height:16px;color:#fff;letter-spacing:-0.06px">Formulas</div>
<div class="ui" style="left:367px;top:39px;font-size:12px;line-height:16px;color:#fff;letter-spacing:-0.09px">Data</div>
<div class="ui" style="left:420.5px;top:39px;font-size:12px;line-height:16px;color:#fff;letter-spacing:-0.31px">Review</div>
<div class="ui" style="left:486px;top:39px;font-size:12px;line-height:16px;color:#fff;letter-spacing:0.05px">View</div>
<div class="ui" style="left:541px;top:39px;font-size:12px;line-height:16px;color:#fff;letter-spacing:-0.08px">Developer</div>
<div class="ui" style="left:640px;top:39px;font-size:12px;line-height:16px;color:#fff;letter-spacing:0.05px">Tell me what you want to do...</div>
<svg style="left:621.5px;top:38px" width="14" height="18" viewBox="0 0 14 18"><path d="M7 2.500a4.200 4.200 0 0 0-2.300 7.700v2.300h4.600v-2.300A4.200 4.200 0 0 0 7 2.500z" fill="none" stroke="#fff" stroke-width="1.1"/><path d="M5 14.200h4M5.500 15.800h3" stroke="#fff" stroke-width="1"/></svg>
<div class="sep" style="left:157px;top:63px;height:84px"></div>
<div class="sep" style="left:364px;top:63px;height:84px"></div>
<div class="sep" style="left:628px;top:63px;height:84px"></div>
<div class="sep" style="left:768px;top:63px;height:84px"></div>
<div class="sep" style="left:949px;top:63px;height:84px"></div>
<div class="ui" style="left:20.5px;width:100px;text-align:center;top:135px;line-height:16px;color:#5c5c5c;font-size:12px;letter-spacing:-0.15px">Clipboard</div>
<div class="ui" style="left:203px;width:100px;text-align:center;top:135px;line-height:16px;color:#5c5c5c;font-size:12px;letter-spacing:-0.25px">Font</div>
<div class="ui" style="left:438.5px;width:100px;text-align:center;top:135px;line-height:16px;color:#5c5c5c;font-size:12px;letter-spacing:0.07px">Alignment</div>
<div class="ui" style="left:640.5px;width:100px;text-align:center;top:135px;line-height:16px;color:#5c5c5c;font-size:12px;letter-spacing:-0.20px">Number</div>
<div class="ui" style="left:808.5px;width:100px;text-align:center;top:135px;line-height:16px;color:#5c5c5c;font-size:12px;letter-spacing:-0.36px">Styles</div>
<div class="ui" style="left:967px;width:100px;text-align:center;top:135px;line-height:16px;color:#5c5c5c;font-size:12px;letter-spacing:-0.56px">Cells</div>
<svg style="left:146px;top:140px" width="7" height="7" viewBox="0 0 7 7"><path d="M.5 4.500V.5H4.500" fill="none" stroke="#777" stroke-width="1"/><path d="M2.500 2.500l3.500 3.500" fill="none" stroke="#777" stroke-width="1"/><path d="M7 3v4H3z" fill="#777"/></svg>
<svg style="left:353px;top:140px" width="7" height="7" viewBox="0 0 7 7"><path d="M.5 4.500V.5H4.500" fill="none" stroke="#777" stroke-width="1"/><path d="M2.500 2.500l3.500 3.500" fill="none" stroke="#777" stroke-width="1"/><path d="M7 3v4H3z" fill="#777"/></svg>
<svg style="left:617px;top:140px" width="7" height="7" viewBox="0 0 7 7"><path d="M.5 4.500V.5H4.500" fill="none" stroke="#777" stroke-width="1"/><path d="M2.500 2.500l3.500 3.500" fill="none" stroke="#777" stroke-width="1"/><path d="M7 3v4H3z" fill="#777"/></svg>
<svg style="left:757px;top:140px" width="7" height="7" viewBox="0 0 7 7"><path d="M.5 4.500V.5H4.500" fill="none" stroke="#777" stroke-width="1"/><path d="M2.500 2.500l3.500 3.500" fill="none" stroke="#777" stroke-width="1"/><path d="M7 3v4H3z" fill="#777"/></svg>
<svg style="left:10px;top:64px" width="36" height="40" viewBox="0 0 36 40">
<rect x="3" y="5.500" width="24" height="25.500" rx="1.500" fill="#eec678"/>
<rect x="8" y="4" width="14" height="6" fill="#767676"/><rect x="12" y="2" width="6" height="4" rx="1" fill="none" stroke="#767676" stroke-width="1.500"/>
<path d="M17.500 14.500h8.500l4.500 4.500v14h-13z" fill="#fff" stroke="#767676" stroke-width="1.100"/><path d="M26 14.500v4.500h4.500" fill="none" stroke="#767676" stroke-width="1.100"/>
</svg>
<div class="ui" style="left:11px;top:100px;font-size:12px;line-height:16px;letter-spacing:-0.34px">Paste</div>
<svg style="left:21px;top:121px" width="7" height="4"><path d="M0 0h6l-3 3.500z" fill="#666"/></svg>
<svg style="left:49px;top:64px" width="18" height="18" viewBox="0 0 18 18"><path d="M4 1.500l7.500 11M13 1.500l-7.500 11" stroke="#666" stroke-width="1.500" fill="none"/><circle cx="4" cy="14" r="2.300" fill="none" stroke="#3c78c3" stroke-width="1.200"/><circle cx="12.500" cy="14" r="2.300" fill="none" stroke="#3c78c3" stroke-width="1.200"/></svg>
<div class="ui" style="left:68px;top:66px;font-size:12px;line-height:16px;letter-spacing:0.27px">Cut</div>
<svg style="left:48px;top:88px" width="18" height="18" viewBox="0 0 18 18"><path d="M1.500 1.500h6l2 2v8.500h-8z" fill="#fff" stroke="#666" stroke-width="1"/><path d="M3 5h4M3 7h4M3 9h3" stroke="#3c78c3" stroke-width="1"/><path d="M7.500 5.500h6l2.500 2.500v8.500h-8.500z" fill="#fff" stroke="#666" stroke-width="1"/><path d="M9.500 10h5M9.500 12h5M9.500 14h5" stroke="#3c78c3" stroke-width="1"/></svg>
<div class="ui" style="left:68px;top:89px;font-size:12px;line-height:16px;letter-spacing:-0.13px">Copy</div>
<svg style="left:105.500px;top:94px" width="7" height="4"><path d="M0 0h6l-3 3.500z" fill="#666"/></svg>
<svg style="left:49px;top:111px" width="18" height="16" viewBox="0 0 18 16"><path d="M1 9l6-3.500 4 5-5 4.500z" fill="#eec678"/><path d="M7.500 4.500l3-2 3.500 4.500-2.500 2.500z" fill="#666"/><path d="M12.500 2.200l2.300-1.500 1.700 2-2.200 1.800z" fill="#444"/></svg>
<div class="ui" style="left:68px;top:112px;font-size:12px;line-height:16px;letter-spacing:-0.03px">Format Painter</div>
<div class="abs" style="left:162px;top:70px;width:111px;height:23px;background:#fff;border:1px solid #c6c6c6"></div>
<div class="abs" style="left:272px;top:70px;width:44px;height:23px;background:#fff;border:1px solid #c6c6c6"></div>
<div class="ui" style="left:165.500px;top:73.500px;font-size:12px;line-height:16px;letter-spacing:-0.00px">Arial</div>
<div class="ui" style="left:276px;top:73.500px;font-size:12px;line-height:16px;letter-spacing:-0.62px">10</div>
<svg style="left:262.500px;top:80px" width="7" height="4"><path d="M0 0h6l-3 3.500z" fill="#666"/></svg>
<svg style="left:305px;top:80px" width="7" height="4"><path d="M0 0h6l-3 3.500z" fill="#666"/></svg>
<div class="ui" style="left:321px;top:72px;font-size:15px;line-height:18px;color:#555">A</div>
<svg style="left:330px;top:73px" width="6" height="4"><path d="M0 3.500h5.500l-2.750-3.500z" fill="#3c78c3"/></svg>
<div class="ui" style="left:344.500px;top:75px;font-size:12.5px;line-height:16px;color:#555">A</div>
<svg style="left:352px;top:73px" width="6" height="4"><path d="M0 0h5.500l-2.750 3.500z" fill="#3c78c3"/></svg>
<div class="ui" style="left:167.500px;top:104px;font-size:13.500px;line-height:16px;font-weight:bold;color:#444">B</div>
<div class="ui" style="left:191.500px;top:104px;font-size:13.500px;line-height:16px;font-style:italic;font-family:'Liberation Serif',serif;font-weight:bold;color:#444">I</div>
<div class="ui" style="left:212px;top:104px;font-size:13.500px;line-height:16px;text-decoration:underline;font-weight:bold;color:#444">U</div>
<svg style="left:230.500px;top:110.500px" width="7" height="4"><path d="M0 0h6l-3 3.500z" fill="#666"/></svg>
<div class="sep" style="left:244px;top:101px;height:22px"></div>
<svg style="left:253px;top:104px" width="14" height="15" viewBox="0 0 14 15"><g fill="#666"><rect x="0" y="0" width="1" height="1"/><rect x="0" y="0" width="1" height="1"/><rect x="0" y="6" width="1" height="1"/><rect x="6" y="0" width="1" height="1"/><rect x="0" y="12" width="1" height="1"/><rect x="12" y="0" width="1" height="1"/><rect x="2" y="0" width="1" height="1"/><rect x="0" y="2" width="1" height="1"/><rect x="2" y="6" width="1" height="1"/><rect x="6" y="2" width="1" height="1"/><rect x="2" y="12" width="1" height="1"/><rect x="12" y="2" width="1" height="1"/><rect x="4" y="0" width="1" height="1"/><rect x="0" y="4" width="1" height="1"/><rect x="4" y="6" width="1" height="1"/><rect x="6" y="4" width="1" height="1"/><rect x="4" y="12" width="1" height="1"/><rect x="12" y="4" width="1" height="1"/><rect x="6" y="0" width="1" height="1"/><rect x="0" y="6" width="1" height="1"/><rect x="6" y="6" width="1" height="1"/><rect x="6" y="6" width="1" height="1"/><rect x="6" y="12" width="1" height="1"/><rect x="12" y="6" width="1" height="1"/><rect x="8" y="0" width="1" height="1"/><rect x="0" y="8" width="1" height="1"/><rect x="8" y="6" width="1" height="1"/><rect x="6" y="8" width="1" height="1"/><rect x="8" y="12" width="1" height="1"/><rect x="12" y="8" width="1" height="1"/><rect x="10" y="0" width="1" height="1"/><rect x="0" y="10" width="1" height="1"/><rect x="10" y="6" width="1" height="1"/><rect x="6" y="10" width="1" height="1"/><rect x="10" y="12" width="1" height="1"/><rect x="12" y="10" width="1" height="1"/><rect x="12" y="0" width="1" height="1"/><rect x="0" y="12" width="1" height="1"/><rect x="12" y="6" width="1" height="1"/><rect x="6" y="12" width="1" height="1"/><rect x="12" y="12" width="1" height="1"/><rect x="12" y="12" width="1" height="1"/></g><rect x="0" y="13" width="13" height="1.3" fill="#444"/></svg>
<svg style="left:273.500px;top:110.500px" width="7" height="4"><path d="M0 0h6l-3 3.500z" fill="#666"/></svg>
<div class="sep" style="left:287px;top:101px;height:22px"></div>
<svg style="left:295px;top:103px" width="17" height="18" viewBox="0 0 17 18"><path d="M2.500 8l5.500-5.500 5.500 5.500-5.500 4.500z" fill="#fff" stroke="#444" stroke-width="1.200"/><path d="M5.500 5.500V2a1.300 1.300 0 0 1 2.600 0v3.500" fill="none" stroke="#444" stroke-width="1.100"/><path d="M13 6.500c2 1 2 3 .8 4.500c-.2-1.500-.6-2.500-2.300-3z" fill="#3c78c3"/><rect x="0" y="13" width="16" height="4" fill="#ffff00"/></svg>
<svg style="left:316px;top:110.500px" width="7" height="4"><path d="M0 0h6l-3 3.500z" fill="#666"/></svg>
<div class="ui" style="left:332px;top:102px;font-size:14px;line-height:16px;color:#555;font-weight:bold">A</div>
<div class="abs" style="left:329px;top:116px;width:16px;height:4px;background:#ee0000"></div>
<svg style="left:350px;top:110.500px" width="7" height="4"><path d="M0 0h6l-3 3.500z" fill="#666"/></svg>
<svg style="left:373px;top:73px" width="14" height="9"><rect x="0" y="0" width="14" height="1" fill="#666"/><rect x="0" y="3" width="14" height="1" fill="#666"/><rect x="0" y="6" width="14" height="1" fill="#666"/></svg>
<svg style="left:395px;top:77px" width="14" height="9"><rect x="0" y="0" width="14" height="1" fill="#666"/><rect x="0" y="3" width="14" height="1" fill="#666"/><rect x="0" y="6" width="14" height="1" fill="#666"/></svg>
<div class="abs" style="left:413px;top:70px;width:22px;height:23px;background:#c6c6c6"></div>
<svg style="left:417px;top:82px" width="14" height="9"><rect x="0" y="0" width="14" height="1" fill="#666"/><rect x="0" y="3" width="14" height="1" fill="#666"/><rect x="0" y="6" width="14" height="1" fill="#666"/></svg>
<svg style="left:373px;top:107px" width="14" height="12"><rect x="0" y="0" width="14" height="1" fill="#666"/><rect x="0" y="3" width="10" height="1" fill="#666"/><rect x="0" y="6" width="14" height="1" fill="#666"/><rect x="0" y="9" width="10" height="1" fill="#666"/></svg>
<svg style="left:395px;top:107px" width="14" height="12"><rect x="0.0" y="0" width="14" height="1" fill="#666"/><rect x="2.5" y="3" width="9" height="1" fill="#666"/><rect x="0.0" y="6" width="14" height="1" fill="#666"/><rect x="2.5" y="9" width="9" height="1" fill="#666"/></svg>
<svg style="left:417px;top:107px" width="14" height="12"><rect x="0" y="0" width="14" height="1" fill="#666"/><rect x="4" y="3" width="10" height="1" fill="#666"/><rect x="0" y="6" width="14" height="1" fill="#666"/><rect x="4" y="9" width="10" height="1" fill="#666"/></svg>
<div class="sep" style="left:439px;top:70px;height:22px"></div>
<div class="sep" style="left:439px;top:101px;height:22px"></div>
<div class="sep" style="left:492px;top:69px;height:55px"></div>
<svg style="left:446px;top:72px" width="20" height="18" viewBox="0 0 20 18"><text x="2" y="11" font-size="10.500" font-family="Liberation Sans, sans-serif" fill="#444" transform="rotate(-42 5 8)">ab</text><path d="M7.500 15.500L16.500 6" stroke="#444" stroke-width="1.100"/><path d="M13.200 5.500h3.800v3.800z" fill="#444"/></svg>
<svg style="left:466.500px;top:80px" width="7" height="4"><path d="M0 0h6l-3 3.500z" fill="#666"/></svg>
<svg style="left:447px;top:105px" width="17" height="14" viewBox="0 0 17 14"><path d="M0 .500h16M8 3.500h8M8 6.500h8M8 9.500h8M0 12.500h16" stroke="#666" stroke-width="1"/><path d="M6.500 6.500H2" stroke="#3c78c3" stroke-width="2"/><path d="M4 3.500L.500 6.500 4 9.500z" fill="#3c78c3"/></svg>
<svg style="left:469px;top:105px" width="17" height="14" viewBox="0 0 17 14"><path d="M0 .500h16M8 3.500h8M8 6.500h8M8 9.500h8M0 12.500h16" stroke="#666" stroke-width="1"/><path d="M0 6.500h4.500" stroke="#3c78c3" stroke-width="2"/><path d="M3 3.500l3.500 3-3.500 3z" fill="#3c78c3"/></svg>
<svg style="left:500px;top:73px" width="17" height="16" viewBox="0 0 17 16"><path d="M.500 .500h8.500v4h-8.500zM.500 6.500h8.500v8h-8.500z" fill="none" stroke="#666" stroke-width="1"/><path d="M2 2.500h11.500M2.200 9h5.500M2.200 11.500h5.500" stroke="#3c78c3" stroke-width="1"/><path d="M13.500 2.500c2.500 1.500 1.500 6-3 6.300" fill="none" stroke="#3c78c3" stroke-width="1.100"/><path d="M12.500 6.500l-2.300 2.300 2.300 2.200" fill="none" stroke="#3c78c3" stroke-width="1.100"/></svg>
<div class="ui" style="left:519.500px;top:73.500px;font-size:12px;line-height:16px;letter-spacing:-0.18px">Wrap Text</div>
<svg style="left:500px;top:104px" width="16" height="16" viewBox="0 0 16 16"><path d="M.500 .500h14v14h-14zM.500 4.500h14M.500 10.500h14M7.500 .500v4M7.500 10.500v4" fill="none" stroke="#666" stroke-width="1"/><path d="M3 7.500h9" stroke="#3c78c3" stroke-width="1.200"/><path d="M4.500 5.800l-2 1.700 2 1.700M10.500 5.800l2 1.700-2 1.700" fill="none" stroke="#3c78c3" stroke-width="1"/></svg>
<div class="ui" style="left:519.500px;top:104.500px;font-size:12px;line-height:16px;letter-spacing:0.09px">Merge &amp; Center</div>
<svg style="left:613.500px;top:110.500px" width="7" height="4"><path d="M0 0h6l-3 3.500z" fill="#666"/></svg>
<div class="abs" style="left:633px;top:70px;width:131px;height:23px;background:#fff;border:1px solid #c6c6c6"></div>
<div class="ui" style="left:636.500px;top:73.500px;font-size:12px;line-height:16px;letter-spacing:-0.43px">General</div>
<svg style="left:753px;top:80px" width="7" height="4"><path d="M0 0h6l-3 3.500z" fill="#666"/></svg>
<svg style="left:635px;top:104px" width="19" height="17" viewBox="0 0 19 17"><rect x="1.800" y=".800" width="14.500" height="7.400" fill="#fff" stroke="#3c78c3" stroke-width="1.600"/><path d="M9 2.300a2.200 2.200 0 1 0 0 4.400z" fill="#3c78c3"/><circle cx="9.300" cy="4.500" r="1.300" fill="#3c78c3"/><g fill="#e9bd72" stroke="#f1f1f1" stroke-width=".600"><ellipse cx="8.500" cy="14.900" rx="3.600" ry="1.500"/><ellipse cx="8.500" cy="12.700" rx="3.600" ry="1.500"/><ellipse cx="13.500" cy="11.500" rx="3.600" ry="1.500"/><ellipse cx="13.500" cy="9.200" rx="3.600" ry="1.500"/><ellipse cx="13.500" cy="6.900" rx="3.600" ry="1.500"/></g></svg>
<svg style="left:657.500px;top:110.500px" width="7" height="4"><path d="M0 0h6l-3 3.500z" fill="#666"/></svg>
<div class="ui" style="left:671.500px;top:102px;font-size:15.500px;line-height:20px;color:#444">%</div>
<div class="ui" style="left:696.500px;top:96px;font-size:17px;line-height:24px;font-weight:bold;color:#444;font-family:'Liberation Serif',serif">,</div>
<div class="sep" style="left:715px;top:101px;height:22px"></div>
<svg style="left:723px;top:104px" width="16" height="16" viewBox="0 0 16 16"><path d="M1.200 3.500h5" stroke="#3c78c3" stroke-width="1.400"/><path d="M3.500 1.200l-2.400 2.300 2.400 2.300" fill="none" stroke="#3c78c3" stroke-width="1.400"/><text x="7.300" y="6.500" font-size="8.600" font-family="Liberation Sans,sans-serif" fill="#444">.0</text><text x="2.300" y="13.500" font-size="8.600" font-family="Liberation Sans,sans-serif" fill="#444">.00</text></svg>
<svg style="left:744px;top:104px" width="17" height="16" viewBox="0 0 17 16"><text x="4" y="6.500" font-size="8.600" font-family="Liberation Sans,sans-serif" fill="#444">.00</text><path d="M1 10.800h5" stroke="#3c78c3" stroke-width="1.400"/><path d="M3.800 8.500l2.400 2.300-2.400 2.300" fill="none" stroke="#3c78c3" stroke-width="1.400"/><text x="8.700" y="13.500" font-size="8.600" font-family="Liberation Sans,sans-serif" fill="#444">.0</text></svg>
<svg style="left:795px;top:67px" width="31" height="31" viewBox="0 0 31 31"><rect x=".500" y=".500" width="26" height="24" fill="#fff" stroke="#8a8a8a"/><path d="M7 .500v24M13.500 .500v24M20 .500v24M.500 6.500h26M.500 12.500h26M.500 18.500h26" stroke="#8a8a8a" stroke-width="1"/><rect x="7.500" y="1" width="6" height="5.500" fill="#d6532c"/><rect x="7.500" y="7" width="11" height="5.500" fill="#3f7fc6"/><rect x="7.500" y="13" width="9" height="5.500" fill="#d6532c"/><rect x="7.500" y="19" width="4" height="5.500" fill="#3f7fc6"/><rect x="14.500" y="17.500" width="15" height="12" fill="#fff" stroke="#666"/><text x="17.500" y="28" font-size="13" font-weight="bold" font-family="Liberation Sans,sans-serif" fill="#333">≠</text></svg>
<div class="ui" style="left:759px;width:100px;text-align:center;top:100px;font-size:12px;line-height:16px;letter-spacing:0.15px">Conditional</div>
<div class="ui" style="left:754px;width:100px;text-align:center;top:116px;font-size:12px;line-height:16px;letter-spacing:0.09px">Formatting</div>
<svg style="left:838px;top:123px" width="7" height="4"><path d="M0 0h6l-3 3.500z" fill="#666"/></svg>
<svg style="left:860px;top:69px" width="32" height="30" viewBox="0 0 32 30"><rect x=".500" y=".500" width="24" height="20" fill="#fff" stroke="#8a8a8a"/><rect x="6.500" y="5.500" width="18" height="15" fill="#c5d9f1"/><path d="M6.500 .500v20M12.500 .500v20M18.500 .500v20M.500 5.500h24M.500 10.500h24M.500 15.500h24" stroke="#8a8a8a" stroke-width="1"/><polygon points="28.7,5.6 29.2,12.8 24.1,18.3 20.3,14.1" fill="#7a7a7a" stroke="#f1f1f1" stroke-width="1.4" paint-order="stroke"/><polygon points="19.7,14.8 23.4,18.9 21.6,20.6 17.9,16.7" fill="#7a7a7a" stroke="#f1f1f1" stroke-width="1" paint-order="stroke"/><path d="M6.800 27.6C10 24 13 20.5 16 19.2C19 18 21.500 20 20.500 23.3C19.500 26.5 15 27.8 6.800 27.6Z" fill="#3f7fc6"/><ellipse cx="18.200" cy="21.6" rx="1.700" ry="1.100" fill="#fff" transform="rotate(40 18.2 21.6)"/></svg>
<div class="ui" style="left:823.500px;width:100px;text-align:center;top:100px;font-size:12px;line-height:16px;letter-spacing:-0.22px">Format as</div>
<div class="ui" style="left:819px;width:100px;text-align:center;top:116px;font-size:12px;line-height:16px;letter-spacing:-0.22px">Table</div>
<svg style="left:886px;top:123px" width="7" height="4"><path d="M0 0h6l-3 3.500z" fill="#666"/></svg>
<svg style="left:910px;top:67px" width="32" height="32" viewBox="0 0 32 32"><rect x=".500" y=".500" width="25" height="21" fill="#fff" stroke="#8a8a8a"/><path d="M5.500 .500v21M19.500 .500v21M.500 5.500h25M.500 16.500h25" stroke="#8a8a8a" stroke-width="1"/><rect x="6" y="6" width="13" height="10" fill="#c5d9f1"/><polygon points="28.7,7.6 29.2,14.8 24.1,20.3 20.3,16.1" fill="#7a7a7a" stroke="#f1f1f1" stroke-width="1.4" paint-order="stroke"/><polygon points="19.7,16.8 23.4,20.9 21.6,22.6 17.9,18.7" fill="#7a7a7a" stroke="#f1f1f1" stroke-width="1" paint-order="stroke"/><path d="M6.800 29.6C10 26 13 22.5 16 21.2C19 20 21.500 22 20.500 25.3C19.500 28.5 15 29.8 6.800 29.6Z" fill="#3f7fc6"/><ellipse cx="18.200" cy="23.6" rx="1.700" ry="1.100" fill="#fff" transform="rotate(40 18.2 23.6)"/></svg>
<div class="ui" style="left:873px;width:100px;text-align:center;top:100px;font-size:12px;line-height:16px;letter-spacing:-0.09px">Cell</div>
<div class="ui" style="left:869px;width:100px;text-align:center;top:116px;font-size:12px;line-height:16px;letter-spacing:-0.36px">Styles</div>
<svg style="left:937px;top:123px" width="7" height="4"><path d="M0 0h6l-3 3.500z" fill="#666"/></svg>
<svg style="left:962px;top:67px" width="27" height="28" viewBox="0 0 27 28"><g fill="#fff" stroke="#7a7a7a" stroke-width="1"><path d="M.500 .500h14v5h-14zM7.500 .500v5"/><path d="M.500 16.500h14v10h-14zM7.500 16.500v10M.500 21.500h14"/></g><path d="M11.500 8.500h14v5h-14zM18.500 8.500v5" fill="#c5d9f1" stroke="#7a7a7a"/><path d="M2 11h6" stroke="#3f7fc6" stroke-width="2"/><path d="M5 7.800l-3.300 3.200 3.300 3.200" fill="none" stroke="#3f7fc6" stroke-width="2"/></svg>
<div class="ui" style="left:924.500px;width:100px;text-align:center;top:100px;font-size:12px;line-height:16px;letter-spacing:0.16px">Insert</div>
<svg style="left:971.500px;top:122px" width="7" height="4"><path d="M0 0h6l-3 3.500z" fill="#666"/></svg>
<svg style="left:1003px;top:67px" width="30" height="28" viewBox="0 0 30 28"><g fill="#fff" stroke="#7a7a7a" stroke-width="1"><path d="M.500 .500h14v5h-14zM7.500 .500v5"/><path d="M.500 17.500h14v10h-14zM7.500 17.500v10M.500 22.500h14"/></g><path d="M6.500 8.500h10v5h-10z" fill="#c5d9f1" stroke="#7a7a7a"/><path d="M16 6l11.500 11.500M27.500 6L16 17.500" stroke="#d6532c" stroke-width="2.200"/></svg>
<div class="ui" style="left:966.500px;width:100px;text-align:center;top:100px;font-size:12px;line-height:16px;letter-spacing:-0.28px">Delete</div>
<svg style="left:1013.500px;top:122px" width="7" height="4"><path d="M0 0h6l-3 3.500z" fill="#666"/></svg>
<svg style="left:1045px;top:62px" width="24" height="36" viewBox="0 0 24 36"><path d="M1 5h20" stroke="#3f7fc6" stroke-width="1.200"/><path d="M3.500 2.500l-2.500 2.500 2.500 2.500M18.500 2.500l2.500 2.500-2.500 2.500" fill="none" stroke="#3f7fc6" stroke-width="1.200"/><path d="M0 2v6" stroke="#3f7fc6" stroke-width="1"/><g fill="#fff" stroke="#7a7a7a"><path d="M.500 11.500h24v21h-24zM.500 16.500h24M.500 27.500h24M7.500 11.500v21M16.500 11.500v21"/></g><rect x="8.500" y="17" width="7.500" height="10" fill="#3f7fc6"/><path d="M.500 32.500v2l3 1.500h4l1-3.500M9.500 32.500l1 3h6l1-3" fill="#fff" stroke="#7a7a7a"/></svg>
<div class="ui" style="left:1040.500px;top:100px;font-size:12px;line-height:16px;letter-spacing:-0.50px">Format</div>
<svg style="left:1055.500px;top:122px" width="7" height="4"><path d="M0 0h6l-3 3.500z" fill="#666"/></svg>
<div class="abs" style="left:5px;top:162px;width:102px;height:26px;background:#fff;border:1px solid #d4d4d4"></div>
<div class="ui" style="left:12px;top:167px;font-size:12px;line-height:16px;letter-spacing:0.30px">K18</div>
<svg style="left:92.500px;top:172px" width="8" height="5"><path d="M0 0h7l-3.500 4z" fill="#666"/></svg>
<div class="abs" style="left:121px;top:170px;width:1.500px;height:1.500px;background:#aaa;box-shadow:0 4px 0 #aaa,0 8px 0 #aaa"></div>
<div class="abs" style="left:137px;top:162px;width:110px;height:26px;background:#fff;border:1px solid #d4d4d4"></div>
<div class="abs" style="left:250px;top:162px;width:820px;height:26px;background:#fff;border:1px solid #d4d4d4"></div>
<svg style="left:151px;top:170px" width="10" height="10"><path d="M.500 .500l9 9M9.500 .500l-9 9" stroke="#b5b5b5" stroke-width="1.300"/></svg>
<svg style="left:186px;top:169px" width="14" height="11"><path d="M1 6l4 4 8-9" fill="none" stroke="#b5b5b5" stroke-width="1.500"/></svg>
<div class="ui" style="left:222.500px;top:166px;font-size:13.500px;line-height:16px;font-style:italic;font-family:'Liberation Serif',serif;color:#555"><b>f</b><span style="font-size:10.500px">x</span></div>
</body></html>
